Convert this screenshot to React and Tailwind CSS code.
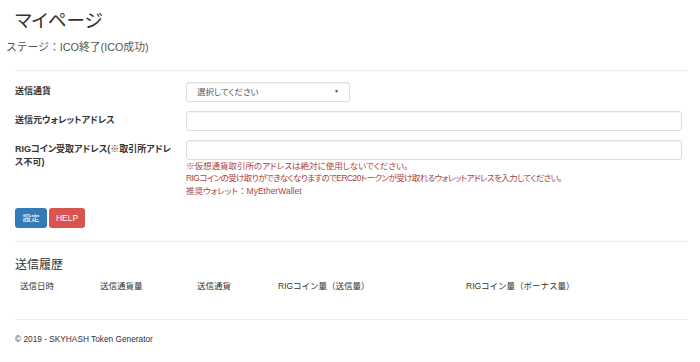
const font = {
  fontFamily: '"Liberation Sans", "Noto Sans CJK JP", sans-serif',
};
const palt = { fontFeatureSettings: '"palt"' };

const FormRow = ({ label, children }) => (
  <div className="flex">
    <label
      className="w-[171px] shrink-0 pr-[8px] pt-[3px] text-[9px] font-bold leading-[13px] text-[#333]"
      style={palt}
    >
      {label}
    </label>
    <div className="flex-1">{children}</div>
  </div>
);

const columns = [
  { name: "送信日時", w: "w-[80px]" },
  { name: "送信通貨量", w: "w-[97px]" },
  { name: "送信通貨", w: "w-[81px]" },
  { name: "RIGコイン量（送信量）", w: "w-[188px]" },
  { name: "RIGコイン量（ボーナス量）", w: "" },
];

export default function App() {
  return (
    <div className="w-[700px] h-[362px] bg-white text-[#333] overflow-hidden" style={font}>
      <div className="px-[15px]">
        <h1 className="pt-[10px] text-[18.5px] leading-[22px] text-[#333]" style={palt}>
          マイページ
        </h1>
        <p className="-ml-[9px] mt-[8px] text-[10.8px] leading-[14px] text-[#555]">
          ステージ：ICO終了(ICO成功)
        </p>
        <hr className="mt-[16px] border-t border-[#eee] -mr-[3px]" />

        <div className="mt-[11px] flex flex-col gap-[9px] pr-[3px]">
          <FormRow label="送信通貨">
            <div
              className="flex h-[20px] w-[164px] items-center justify-between rounded-[3px] border border-[#ddd] bg-white px-[10px] text-[8.5px] text-[#555] shadow-[inset_0_1px_1px_rgba(0,0,0,0.05)]"
              style={palt}
            >
              <span>選択してください</span>
              <span className="text-[5px] text-[#444]">▼</span>
            </div>
          </FormRow>
          <FormRow label="送信元ウォレットアドレス">
            <div className="h-[20px] w-full rounded-[3px] border border-[#ddd] bg-white shadow-[inset_0_1px_1px_rgba(0,0,0,0.05)]" />
          </FormRow>
          <FormRow
            label={
              <>
                RIGコイン受取アドレス(※取引所アドレ
                <br />
                ス不可)
              </>
            }
          >
            <div className="h-[20px] w-full rounded-[3px] border border-[#ddd] bg-white shadow-[inset_0_1px_1px_rgba(0,0,0,0.05)]" />
            <div className="text-[8.5px] leading-[12.3px] text-[#a94442]" style={palt}>
              <p>※仮想通貨取引所のアドレスは絶対に使用しないでください。</p>
              <p className="tracking-[-0.6px]">
                RIGコインの受け取りができなくなりますのでERC20トークンが受け取れるウォレットアドレスを入力してください。
              </p>
              <p>
                推奨ウォレット<span className="[font-feature-settings:normal]">：</span>MyEtherWallet
              </p>
            </div>
          </FormRow>
        </div>

        <div className="mt-[11px] flex gap-[2px]">
          <button className="h-[20px] w-[32px] rounded-[3px] bg-[#337ab7] text-[8.5px] text-white">
            設定
          </button>
          <button className="h-[20px] w-[36px] rounded-[3px] bg-[#d9534f] text-[8.5px] text-white">
            HELP
          </button>
        </div>
        <hr className="mt-[13px] border-t border-[#eee] -mr-[3px]" />

        <h2 className="mt-[15px] text-[12px] leading-[16px] text-[#333]">送信履歴</h2>
        <div className="mt-[6px] flex pl-[5px] text-[8.5px] leading-[14px] text-[#333]">
          {columns.map((c) => (
            <div key={c.name} className={c.w}>
              {c.name}
            </div>
          ))}
        </div>

        <hr className="mt-[26px] border-t border-[#eee] -mr-[3px]" />
        <p className="mt-[12px] text-[8.3px] leading-[14px] text-[#333]">
          © 2019 - SKYHASH Token Generator
        </p>
      </div>
    </div>
  );
}
